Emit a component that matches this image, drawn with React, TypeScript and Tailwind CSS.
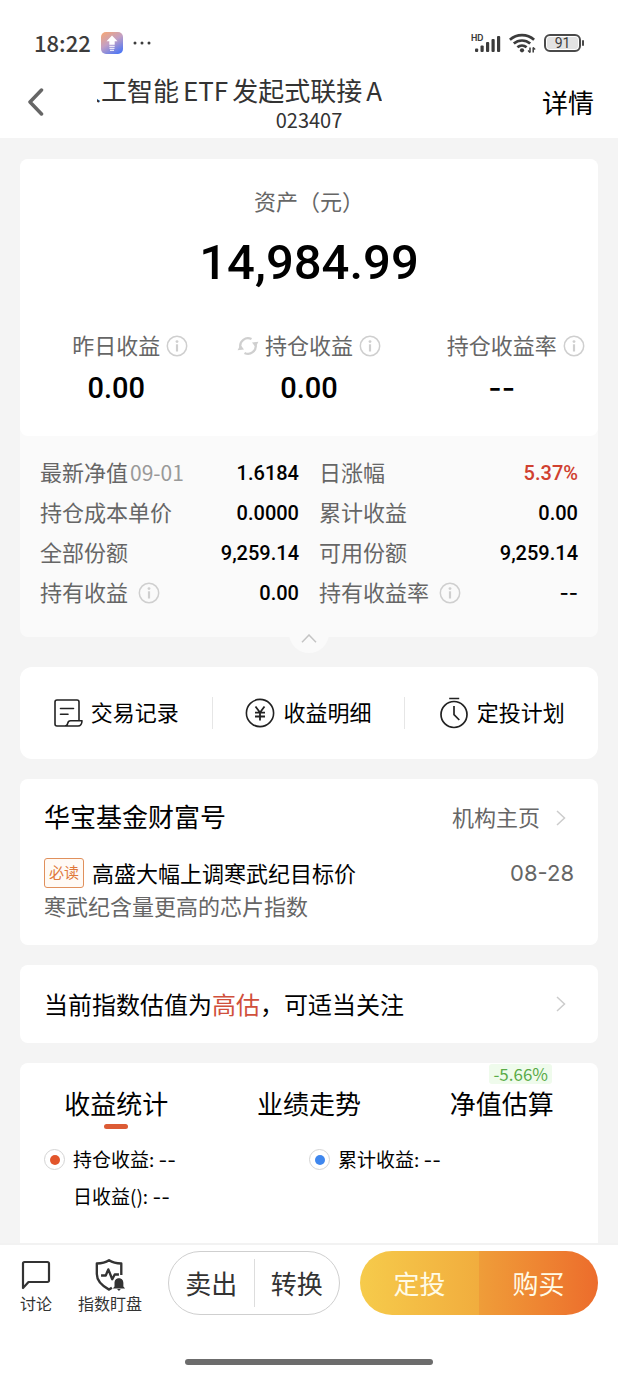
import type { ReactNode } from "react";

function InfoIcon() {
  return (
    <svg viewBox="0 0 22 22" className="size-[22px] shrink-0" fill="none" aria-hidden="true">
      <circle cx="11" cy="11" r="9.7" stroke="#cfcfcf" strokeWidth="1.5" />
      <circle cx="11" cy="6.6" r="1.4" fill="#cfcfcf" />
      <path d="M11 9.3v7.2" stroke="#cfcfcf" strokeWidth="2.2" />
    </svg>
  );
}

function InfoButton({ label }: { label: string }) {
  return (
    <button type="button" aria-label={label} className="shrink-0">
      <InfoIcon />
    </button>
  );
}

function RefreshIcon() {
  return (
    <svg viewBox="0 0 22 20" className="h-5 w-[22px]" fill="none" aria-hidden="true">
      <g stroke="#cfcfcf" strokeWidth="2.2">
        <path d="M3.400 11.500A7.700 7.700 0 0 1 14.500 3.100" />
        <path d="M18.600 8.500A7.700 7.700 0 0 1 7.500 16.900" />
      </g>
      <path d="M0.600 14.200l2.800-5.400 3.600 4.700z" fill="#cfcfcf" />
      <path d="M21.400 5.800l-2.800 5.400-3.600-4.700z" fill="#cfcfcf" />
    </svg>
  );
}

function Chevron() {
  return (
    <svg viewBox="0 0 10 16" className="h-4 w-2.5" fill="none" stroke="#cccccc" strokeWidth="1.5" aria-hidden="true">
      <path d="M1 1l7.5 7L1 15" />
    </svg>
  );
}

function StatusBar() {
  return (
    <div className="flex h-[26px] items-center justify-between pr-[34px] pl-[34px] text-[#3c3c3c]">
      <div className="flex items-center">
        <span className="pb-0.5 font-['Noto_Sans_CJK_SC',sans-serif] text-[22px] leading-[26px] font-medium">18:22</span>
        <svg viewBox="0 0 22 22" className="ml-2.5 size-[22px]" aria-hidden="true">
          <defs>
            <linearGradient id="appGradient" x1="0.2" y1="0" x2="0.8" y2="1">
              <stop offset="0" stopColor="#f0a67e" />
              <stop offset="0.45" stopColor="#c3a0c4" />
              <stop offset="1" stopColor="#4c76f5" />
            </linearGradient>
          </defs>
          <rect width="22" height="22" rx="5" fill="url(#appGradient)" />
          <path d="M11 3.500l5.500 5.800h-2.800v3.500H8.300V9.300H5.500z" fill="#fff" />
          <path d="M8.300 14.300h5.400M8.500 16.300h5M9 18.300h4" stroke="#fff" strokeWidth="1" />
        </svg>
        <svg viewBox="0 0 18 4" className="ml-2.5 h-1 w-[18px]" fill="currentColor" aria-hidden="true">
          <circle cx="2" cy="2" r="1.500" />
          <circle cx="9" cy="2" r="1.500" />
          <circle cx="16" cy="2" r="1.500" />
        </svg>
      </div>
      <div className="flex items-center gap-2">
        <svg viewBox="0 0 30 20" className="h-5 w-[30px]" fill="currentColor" aria-hidden="true">
          <text x="0" y="8" fontSize="8.500" fontWeight="700" fontFamily="Inter, sans-serif">HD</text>
          <rect x="4" y="15.500" width="3.200" height="3.500" rx="1" />
          <rect x="9.500" y="12.500" width="3.200" height="6.500" rx="1" />
          <rect x="15" y="9" width="3.200" height="10" rx="1" />
          <rect x="20.500" y="6" width="3.200" height="13" rx="1" />
          <rect x="26" y="3" width="3.200" height="16" rx="1" />
        </svg>
        <svg viewBox="0 0 27 20" className="h-5 w-[27px]" fill="none" stroke="currentColor" strokeWidth="2.700" aria-hidden="true">
          <path d="M0.900 6.800a18 18 0 0 1 24.200 0" />
          <path d="M4.800 10.600a12.400 12.400 0 0 1 16.400 0" />
          <path d="M8.400 14.200a7.200 7.200 0 0 1 9.200 0" />
          <circle cx="13" cy="17.300" r="2.100" fill="currentColor" stroke="none" />
          <path d="M21 14.500v5M24.200 14.500v5" strokeWidth="1.500" />
          <path d="M19 17.500l2 2M26.200 16.500l-2-2" strokeWidth="1.200" />
        </svg>
        <div className="flex items-center gap-px">
          <div className="flex h-[18px] w-[37px] rounded-[6px] border-2 border-[#4a4a4a] p-px">
            <span className="flex flex-1 items-center justify-center rounded-[3px] bg-[#e3e3e3] font-['Roboto',sans-serif] text-sm leading-3">
              91
            </span>
          </div>
          <span className="h-1.5 w-0.5 rounded-full bg-[#4a4a4a]" />
        </div>
      </div>
    </div>
  );
}

function Header() {
  return (
    <header className="bg-white pt-[30px] pb-1.5">
      <StatusBar />
      <div className="mt-4 grid grid-cols-[69px_1fr_73px] items-center pr-6 pl-7">
        <button type="button" aria-label="返回" className="justify-self-start">
          <svg viewBox="0 0 16 28" className="h-7 w-4" fill="none" stroke="#666666" strokeWidth="3.500" strokeLinecap="round" strokeLinejoin="round" aria-hidden="true">
            <path d="M13.500 2L2 14l11.500 12" />
          </svg>
        </button>
        <div className="min-w-0 text-[#333333]">
          <h1 className="flex h-9 max-w-[285px] justify-end overflow-hidden text-[26px] leading-9 whitespace-nowrap">
            <span>
              人工智能<span className="mx-1">ETF</span>发起式联接<span className="ml-1">A</span>
            </span>
          </h1>
          <p className="text-center text-xl leading-6">023407</p>
        </div>
        <a href="#detail" className="justify-self-end text-[26px] leading-9 text-black">
          详情
        </a>
      </div>
    </header>
  );
}

function valueFont(value: string) {
  return value === "--" ? "font-['Inter',sans-serif]" : "font-['Roboto',sans-serif]";
}

function Stat({ label, value, refresh = false }: { label: string; value: string; refresh?: boolean }) {
  return (
    <div>
      <div className="grid grid-cols-[1fr_auto_1fr] items-center gap-1.5 text-[22px] leading-7 text-[#666666]">
        <span className="flex justify-end">
          {refresh && (
            <button type="button" aria-label="刷新">
              <RefreshIcon />
            </button>
          )}
        </span>
        <span className="pb-1 whitespace-nowrap">{label}</span>
        <span className="flex">
          <InfoButton label={label + "说明"} />
        </span>
      </div>
      <p className={"mt-1.5 text-center text-[29px] leading-10 font-medium text-black " + valueFont(value)}>{value}</p>
    </div>
  );
}

type Detail = { label: string; value: string; date?: string; info?: boolean; rise?: boolean };

const details: Detail[] = [
  { label: "最新净值", date: "09-01", value: "1.6184" },
  { label: "日涨幅", value: "5.37%", rise: true },
  { label: "持仓成本单价", value: "0.0000" },
  { label: "累计收益", value: "0.00" },
  { label: "全部份额", value: "9,259.14" },
  { label: "可用份额", value: "9,259.14" },
  { label: "持有收益", value: "0.00", info: true },
  { label: "持有收益率", value: "--", info: true },
];

function AssetCard() {
  return (
    <section className="relative rounded-lg bg-[#fafafa]">
      <div className="rounded-lg bg-white pt-[25px] pb-7">
        <h2 className="text-center text-[22px] leading-8 text-[#666666]">资产（元）</h2>
        <p className="mt-[15px] text-center font-['Roboto',sans-serif] text-[49px] leading-[64px] font-medium text-black">14,984.99</p>
        <div className="mt-[35px] grid grid-cols-3">
          <Stat label="昨日收益" value="0.00" />
          <Stat label="持仓收益" value="0.00" refresh />
          <Stat label="持仓收益率" value="--" />
        </div>
      </div>
      <dl className="grid grid-cols-2 gap-x-5 px-5 pt-[17px] pb-6">
        {details.map((d) => (
          <div key={d.label} className="flex h-10 items-center justify-between leading-9">
            <dt className="flex items-center text-[22px] text-[#666666]">
              <span className="pb-1">
                {d.label}
                {d.date && <span className="ml-0.5 text-[21px] text-[#999999]">{d.date}</span>}
              </span>
              {d.info && (
                <span className="ml-2.5 flex">
                  <InfoButton label={d.label + "说明"} />
                </span>
              )}
            </dt>
            <dd className={"text-xl font-medium " + valueFont(d.value) + (d.rise ? " text-[#d0402f]" : " text-black")}>{d.value}</dd>
          </div>
        ))}
      </dl>
      <button type="button" aria-label="收起" className="absolute -bottom-4 left-1/2 flex size-10 -translate-x-1/2 items-center justify-center rounded-full bg-[#fafafa] pt-2.5">
        <svg viewBox="0 0 16 9" className="h-[9px] w-4" fill="none" stroke="#c4c4c4" strokeWidth="1.500" aria-hidden="true">
          <path d="M1 8.200L8 1l7 7.200" />
        </svg>
      </button>
    </section>
  );
}

function Shortcut({ icon, children }: { icon: ReactNode; children: ReactNode }) {
  return (
    <a href="#records" className="flex h-8 items-center justify-center gap-2 text-[22px] leading-7 text-black">
      {icon}
      <span className="pb-1">{children}</span>
    </a>
  );
}

function Shortcuts() {
  return (
    <nav className="mt-[30px] grid grid-cols-3 divide-x divide-[#e6e6e6] rounded-xl bg-white py-[30px]">
      <Shortcut
        icon={
          <svg viewBox="0 0 30 30" className="size-[30px]" fill="none" stroke="#222222" strokeWidth="1.600" strokeLinejoin="round" strokeLinecap="round" aria-hidden="true">
            <path d="M26 22V4a2 2 0 0 0-2-2H4a2 2 0 0 0-2 2v22a2 2 0 0 0 2 2h21c2.500 0 4-2.500 4-5.200H17.500c-1.800 0-2.500 1.200-2.800 2.600-.4 1.700-1.200 2.600-3 2.600" />
            <path d="M7.500 10.500h13M7.500 16.300h7.500" />
          </svg>
        }
      >
        交易记录
      </Shortcut>
      <Shortcut
        icon={
          <svg viewBox="0 0 30 30" className="size-[30px]" fill="none" stroke="#222222" strokeWidth="1.600" aria-hidden="true">
            <circle cx="15" cy="15" r="13.600" />
            <path d="M10.500 8.500l4.500 6 4.500-6M10 14.700h10M10 18.500h10M15 14.500v8" strokeWidth="1.800" />
          </svg>
        }
      >
        收益明细
      </Shortcut>
      <Shortcut
        icon={
          <svg viewBox="0 0 30 32" className="h-8 w-[30px]" fill="none" stroke="#222222" strokeWidth="1.700" aria-hidden="true">
            <circle cx="15" cy="17.500" r="13" />
            <path d="M10.200 1.500h10M15 9v8.700l5.300 5.300" />
          </svg>
        }
      >
        定投计划
      </Shortcut>
    </nav>
  );
}

function FundAccount() {
  return (
    <section className="mt-5 rounded-lg bg-white px-6 pt-[19px] pb-[26px]">
      <div className="flex h-10 items-center justify-between leading-9">
        <h2 className="pb-1 text-[26px] text-black">华宝基金财富号</h2>
        <a href="#home" className="flex items-center gap-4 pr-2 text-[22px] text-[#666666]">
          <span className="pb-1">机构主页</span>
          <Chevron />
        </a>
      </div>
      <a href="#article" className="mt-[17px] block">
        <span className="flex h-9 items-center leading-8">
          <span className="flex h-[30px] items-center rounded-[3px] border border-[#e0905c] bg-[#fffaf5] px-1 pb-0.5 text-[15px] text-[#e0783a]">必读</span>
          <span className="ml-2 pb-0.5 text-[22px] text-black">高盛大幅上调寒武纪目标价</span>
          <span className="ml-auto font-['Inter',sans-serif] text-[22px] text-[#666666]">08-28</span>
        </span>
        <span className="block text-[22px] leading-7 text-[#666666]">寒武纪含量更高的芯片指数</span>
      </a>
    </section>
  );
}

function Valuation() {
  return (
    <a href="#valuation" className="mt-5 flex h-[78px] items-center justify-between rounded-lg bg-white pr-8 pl-6 text-2xl text-black">
      <span>
        当前指数估值为<span className="text-[#d0503c]">高估</span>，可适当关注
      </span>
      <Chevron />
    </a>
  );
}

function Legend({ color, children }: { color: string; children: ReactNode }) {
  return (
    <p className="flex items-center gap-2">
      <span className="flex size-[21px] items-center justify-center rounded-full border border-[#d4d4d4]">
        <span className={"size-2.5 rounded-full " + color} />
      </span>
      <span>
        {children} <Dashes />
      </span>
    </p>
  );
}

function Dashes() {
  return <span className="font-['Inter',sans-serif]">--</span>;
}

function Performance() {
  return (
    <section className="mt-5 flex-1 rounded-t-lg bg-white">
      <div role="tablist" className="grid grid-cols-3 text-[26px] leading-10 text-black">
        <button type="button" role="tab" aria-selected="true" className="flex flex-col items-center pt-5">
          收益统计
          <span className="mt-px h-[5px] w-6 rounded-full bg-[#dc5b35]" />
        </button>
        <button type="button" role="tab" aria-selected="false" className="flex flex-col items-center pt-5">
          业绩走势
        </button>
        <button type="button" role="tab" aria-selected="false" className="relative flex flex-col items-center pt-5">
          净值估算
          <span className="absolute top-px right-[46px] rounded-[3px] bg-[#effbec] px-1 text-[17px] leading-5 text-[#5aab48]">-5.66%</span>
        </button>
      </div>
      <div className="mt-3 grid grid-cols-2 px-6 text-[19px] leading-[35px] text-black">
        <Legend color="bg-[#e2552b]">持仓收益:</Legend>
        <Legend color="bg-[#3f87ee]">累计收益:</Legend>
        <p className="pl-[29px]">
          日收益(): <Dashes />
        </p>
      </div>
    </section>
  );
}

function BottomBar() {
  return (
    <footer className="border-t-2 border-[#f2f2f2] bg-white px-5 pt-1.5 pb-2.5 text-[#333333]">
      <div className="flex items-center">
        <button type="button" className="flex flex-col items-center pt-2 text-base leading-6">
          <svg viewBox="0 0 30 32" className="h-8 w-[30px]" fill="none" stroke="#333333" strokeWidth="2.200" strokeLinejoin="round" aria-hidden="true">
            <path d="M2 29V4.500A1.500 1.500 0 0 1 3.500 3h23A1.500 1.500 0 0 1 28 4.500v17a1.500 1.500 0 0 1-1.500 1.500H7.500z" />
          </svg>
          讨论
        </button>
        <button type="button" className="ml-[26px] flex flex-col items-center pt-2 text-base leading-6">
          <svg viewBox="0 0 32 34" className="h-8 w-8" fill="none" stroke="#333333" strokeWidth="2.500" strokeLinejoin="round" aria-hidden="true">
            <path d="M28 17V4.800C22.500 4.600 18.500 3.500 15 1.300 11.500 3.500 7.500 4.600 2 4.800V16c0 7.500 5.500 12.500 13 16.500l3-2" />
            <path d="M6.500 17.500h5l2.700-6.500 4.200 10.500 2.600-5h4.500" />
            <path d="M25.500 20.500c-3.300 0-4.700 2.300-4.700 5v3.700L19 31.300h13l-1.800-2.100v-3.700c0-2.700-1.400-5-4.700-5zM23.500 32h4l-2 2z" fill="#333333" stroke="none" />
          </svg>
          指数盯盘
        </button>
        <div className="ml-[26px] flex h-16 w-[172px] items-center rounded-full border border-[#cfcfcf] text-[26px]">
          <button type="button" className="h-12 flex-1 border-r border-[#dddddd] pb-0.5">
            卖出
          </button>
          <button type="button" className="h-12 flex-1 pb-0.5">
            转换
          </button>
        </div>
        <div className="ml-5 flex h-16 flex-1 overflow-hidden rounded-full text-[26px] text-[#fffbe6]">
          <button type="button" className="flex-1 bg-linear-to-r from-[#f6cb4b] to-[#f1ad3e] pb-0.5">
            定投
          </button>
          <button type="button" className="flex-1 bg-linear-to-r from-[#ef9d39] to-[#ec6c2c] pb-0.5">
            购买
          </button>
        </div>
      </div>
      <div className="mx-auto mt-11 h-1.5 w-[248px] rounded-full bg-[#6c6c6c]" />
    </footer>
  );
}

export default function App() {
  return (
    <div className="flex min-h-screen flex-col bg-[#f4f4f4] font-['Noto_Sans_CJK_SC',sans-serif]">
      <Header />
      <main className="flex flex-1 flex-col px-5 pt-[21px]">
        <AssetCard />
        <Shortcuts />
        <FundAccount />
        <Valuation />
        <Performance />
      </main>
      <BottomBar />
    </div>
  );
}
